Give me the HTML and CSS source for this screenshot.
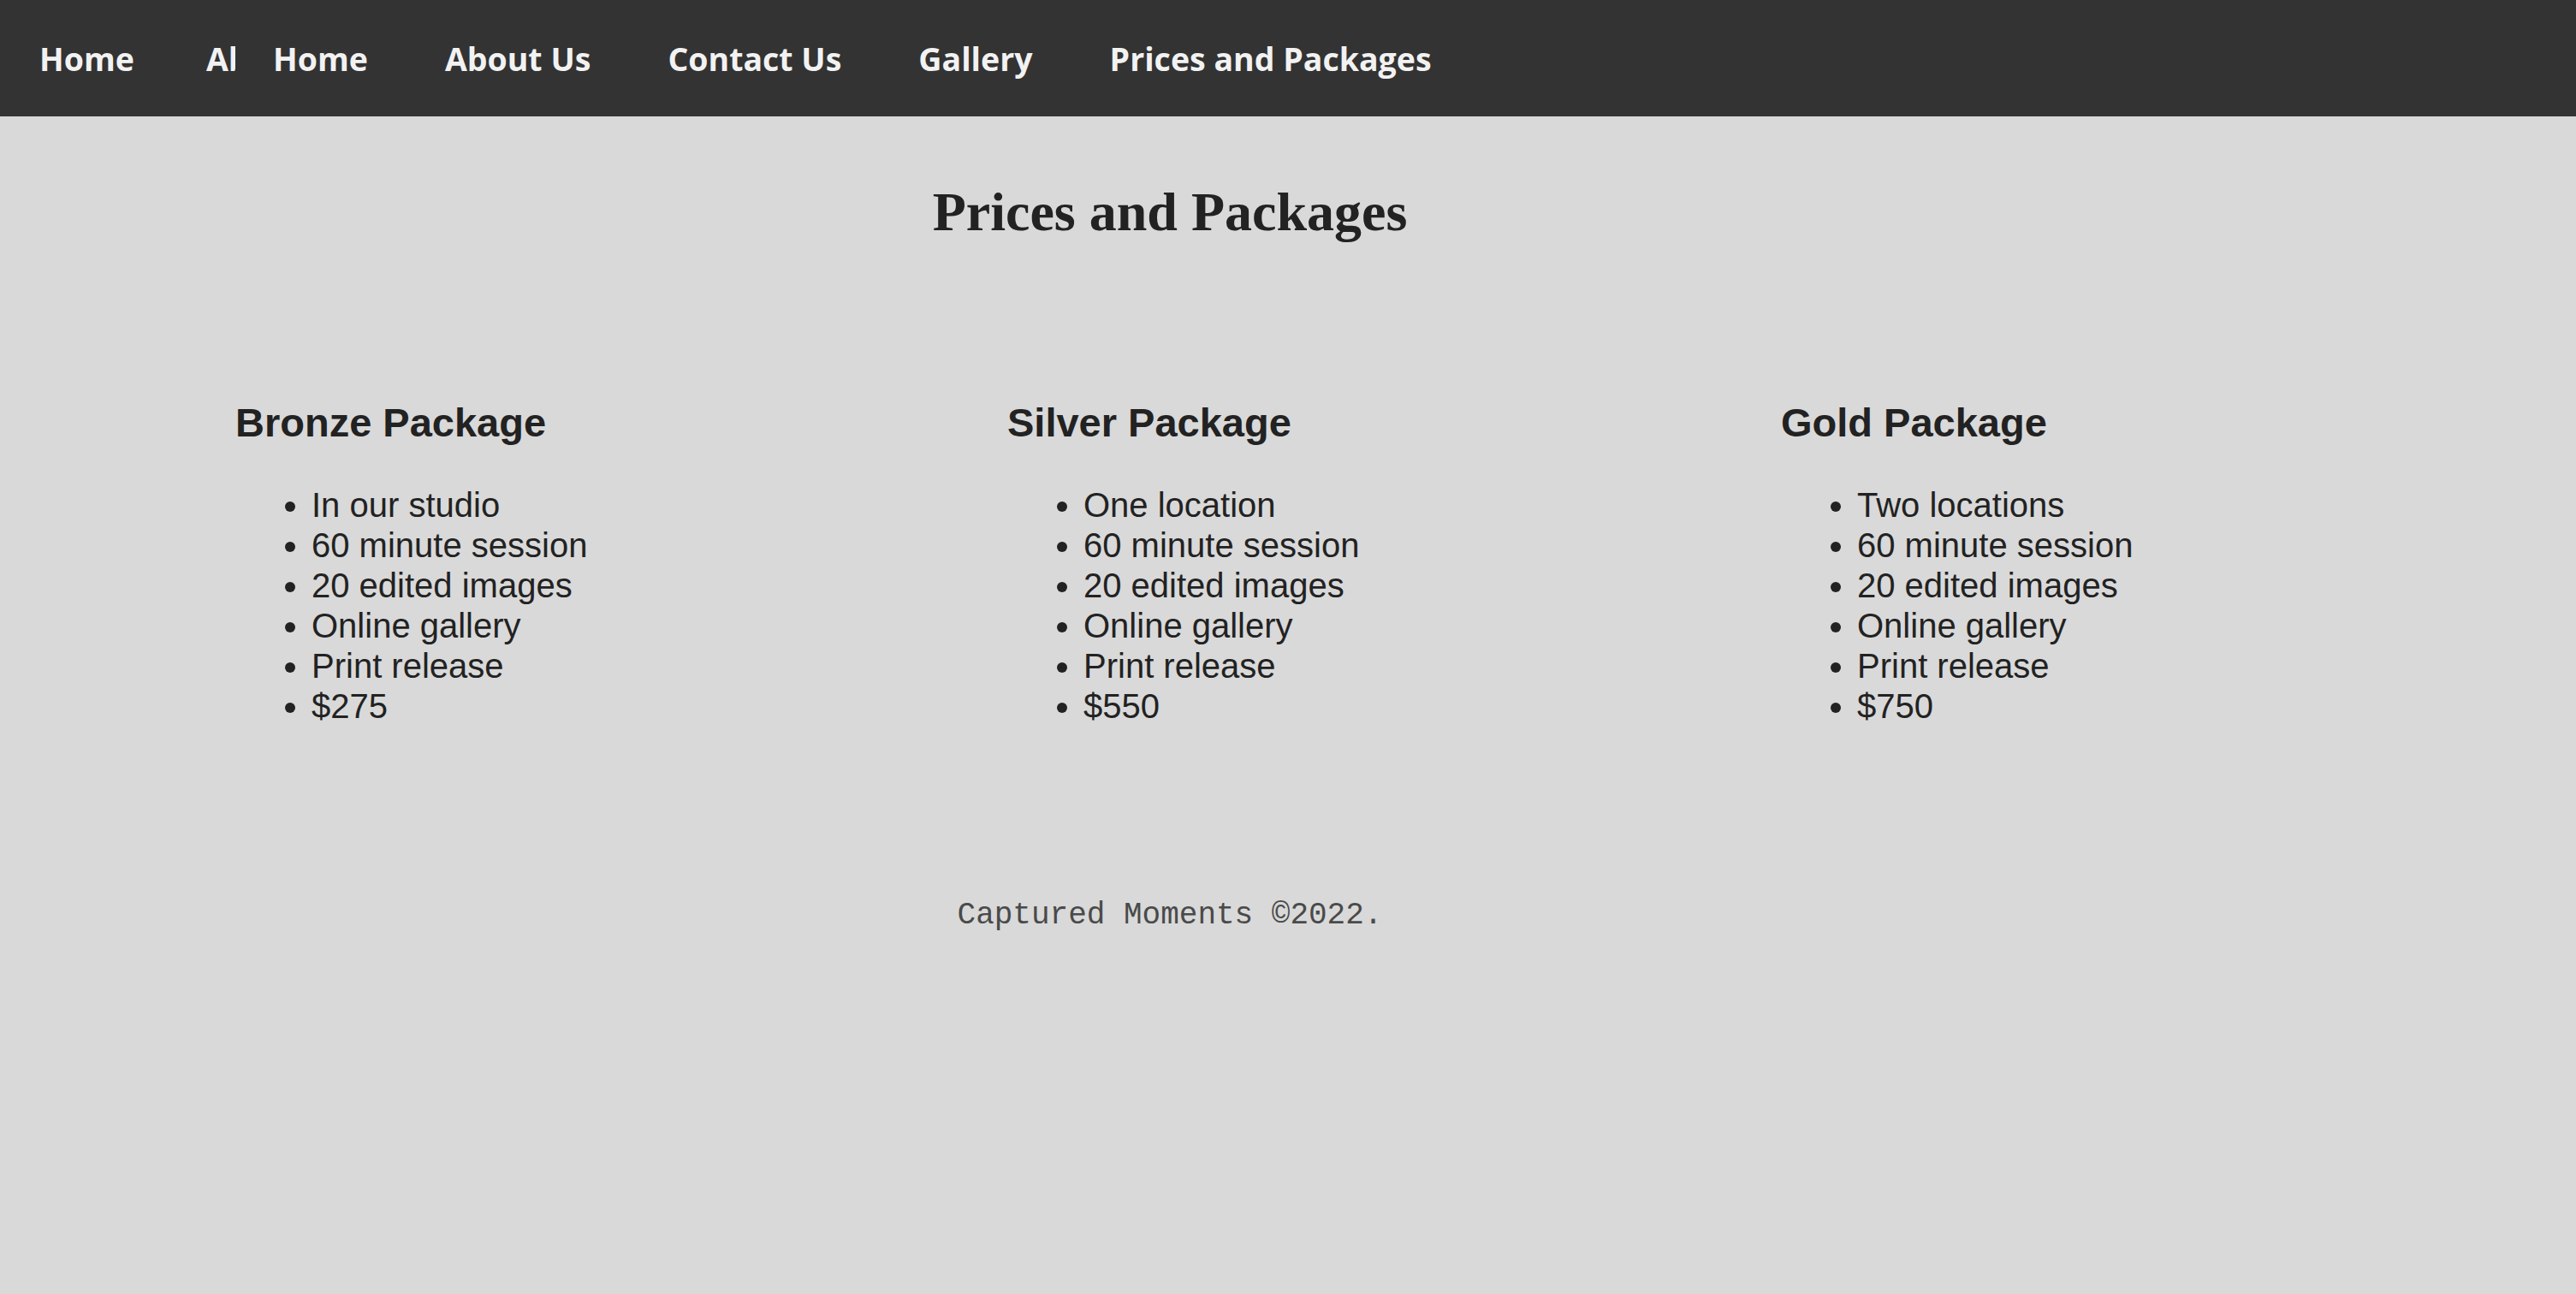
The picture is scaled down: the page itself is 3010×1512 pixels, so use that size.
FILE: index.html
```html
<!DOCTYPE html>
<html lang="en">
<head>
<meta charset="utf-8">
<title>Prices and Packages</title>
<link rel="stylesheet" href="styles.css">
</head>
<body>
<header class="topbar">
  <ul class="nav nav-base">
    <li>Home</li>
    <li>About Us</li>
  </ul>
  <ul class="nav nav-main">
    <li>Home</li>
    <li>About Us</li>
    <li>Contact Us</li>
    <li>Gallery</li>
    <li>Prices and Packages</li>
  </ul>
</header>
<main class="page">
  <h1 class="title">Prices and Packages</h1>
  <section class="packages">
    <div class="package">
      <h2 class="package-name">Bronze Package</h2>
      <ul class="features">
        <li>In our studio</li>
        <li>60 minute session</li>
        <li>20 edited images</li>
        <li>Online gallery</li>
        <li>Print release</li>
        <li>$275</li>
      </ul>
    </div>
    <div class="package">
      <h2 class="package-name">Silver Package</h2>
      <ul class="features">
        <li>One location</li>
        <li>60 minute session</li>
        <li>20 edited images</li>
        <li>Online gallery</li>
        <li>Print release</li>
        <li>$550</li>
      </ul>
    </div>
    <div class="package">
      <h2 class="package-name">Gold Package</h2>
      <ul class="features">
        <li>Two locations</li>
        <li>60 minute session</li>
        <li>20 edited images</li>
        <li>Online gallery</li>
        <li>Print release</li>
        <li>$750</li>
      </ul>
    </div>
  </section>
  <footer class="footer">Captured Moments ©2022.</footer>
</main>
</body>
</html>
```

FILE: styles.css
```css
html, body {
  margin: 0;
  padding: 0;
}
body {
  background: #d9d9d9;
  color: #222;
  font-family: "Liberation Sans", Arial, sans-serif;
  min-height: 1512px;
}
.topbar {
  display: flex;
  height: 136px;
  background: #333;
  overflow: hidden;
}
.nav {
  list-style: none;
  margin: 0;
  height: 136px;
  display: flex;
  align-items: center;
  gap: 90px;
  font-family: "Open Sans", "DejaVu Sans", sans-serif;
  font-weight: 700;
  font-size: 37.5px;
  color: #f2f2f2;
  white-space: nowrap;
}
.nav-base {
  flex: 0 0 275px;
  box-sizing: border-box;
  padding: 0 0 0 46px;
  gap: 84px;
  overflow: hidden;
}
.nav-main {
  flex: 1 1 auto;
  padding: 0 0 0 44px;
}
.page {
  width: 2734px;
}
.title {
  margin: 75px 0 0;
  text-align: center;
  font-family: "Liberation Serif", "Times New Roman", serif;
  font-weight: 700;
  font-size: 64px;
  line-height: 74px;
  color: #222;
}
.packages {
  display: grid;
  grid-template-columns: 902px 904px 902px;
  padding-left: 275px;
  margin-top: 181px;
}
.package-name {
  margin: 0;
  font-size: 47px;
  line-height: 56px;
  font-weight: 700;
}
.features {
  margin: 45px 0 0;
  padding-left: 89px;
  font-size: 40px;
  line-height: 47px;
}
.footer {
  margin-top: 200px;
  text-align: center;
  font-family: "Liberation Mono", "Courier New", monospace;
  font-size: 36px;
  line-height: 42px;
  color: #4a4a4a;
}
```
